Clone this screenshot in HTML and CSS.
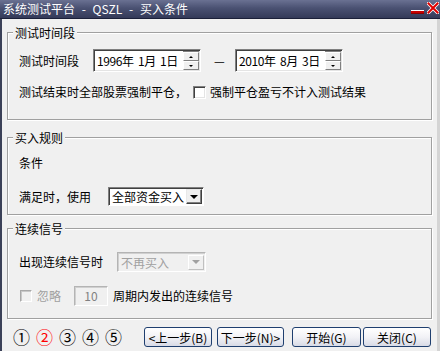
FILE: index.html
```html
<!DOCTYPE html>
<html>
<head>
<meta charset="UTF-8">
<title>买入条件</title>
<link rel="stylesheet" href="styles.css">
</head>
<body>

<div class="window">
	<div class="titlebar">
		<span class="title">系统测试平台 - QSZL - 买入条件</span>
		<span class="caption-btns">
			<svg class="cap-min" width="13" height="4" viewBox="0 0 13 4">
				<rect x="0" y="0" width="13" height="4" fill="#c80000"/>
				<rect x="0" y="0" width="13" height="1" fill="#ffffff"/>
				<rect x="0" y="3" width="13" height="1" fill="#8a0000"/>
			</svg>
			<svg class="cap-close" width="12" height="12" viewBox="0 0 12 12">
				<path d="M1.5 1.5 L10.5 10.5 M10.5 1.5 L1.5 10.5" stroke="#ffffff" stroke-width="3.6" stroke-linecap="square"/>
				<path d="M1.5 1.5 L10.5 10.5 M10.5 1.5 L1.5 10.5" stroke="#e00000" stroke-width="2" stroke-linecap="square"/>
			</svg>
		</span>
	</div>

	<div class="client">

		<!-- 测试时间段 -->
		<fieldset class="group group-time">
			<legend>测试时间段</legend>
			<div class="row row-dates">
				<span class="label">测试时间段</span>
				<span class="datebox">
					<span class="datetext">1996年 1月 1日</span>
					<span class="spin"><span class="spin-btn"><i class="tri-up"></i></span><span class="spin-btn"><i class="tri-down"></i></span></span>
				</span>
				<span class="dash">—</span>
				<span class="datebox datebox-end">
					<span class="datetext">2010年 8月 3日</span>
					<span class="spin"><span class="spin-btn"><i class="tri-up"></i></span><span class="spin-btn"><i class="tri-down"></i></span></span>
				</span>
			</div>
			<div class="row row-close">
				<span class="label">测试结束时全部股票强制平仓，</span>
				<span class="check check-close"></span>
				<span class="label">强制平仓盈亏不计入测试结果</span>
			</div>
		</fieldset>

		<!-- 买入规则 -->
		<fieldset class="group group-rule">
			<legend>买入规则</legend>
			<div class="row row-cond">
				<span class="label">条件</span>
			</div>
			<div class="row row-use">
				<span class="label">满足时，使用</span>
				<span class="select select-use">
					<span class="select-text">全部资金买入</span>
					<span class="select-arrow"><i class="tri-down-big"></i></span>
				</span>
			</div>
		</fieldset>

		<!-- 连续信号 -->
		<fieldset class="group group-signal">
			<legend>连续信号</legend>
			<div class="row row-signal">
				<span class="label">出现连续信号时</span>
				<span class="select select-off">
					<span class="select-text">不再买入</span>
					<span class="select-arrow"><i class="tri-down-big"></i></span>
				</span>
			</div>
			<div class="row row-ignore">
				<span class="check check-off"></span>
				<span class="label label-off">忽略</span>
				<span class="numbox">10</span>
				<span class="label">周期内发出的连续信号</span>
			</div>
		</fieldset>

		<div class="footer">
			<span class="steps">
				<span class="step">①</span>
				<span class="step step-on">②</span>
				<span class="step">③</span>
				<span class="step">④</span>
				<span class="step">⑤</span>
			</span>
			<button type="button" class="btn btn-prev">&lt;上一步(B)</button>
			<button type="button" class="btn btn-next">下一步(N)&gt;</button>
			<button type="button" class="btn btn-start">开始(G)</button>
			<button type="button" class="btn btn-close">关闭(C)</button>
		</div>

	</div>
</div>

</body>
</html>
```

FILE: styles.css
```css
* {box-sizing: border-box;}
body {margin: 0; font-family: "Noto Sans CJK SC", "Liberation Sans", sans-serif; font-size: 12px; color: #000;}

.window {width: 440px; height: 351px; background: #f0f0f0; overflow: hidden; display: flex; flex-direction: column;}

/* title bar */
.titlebar {height: 19px; flex: none; display: flex; justify-content: space-between; align-items: flex-start; padding: 0 1px 0 3px; color: #fff; border-bottom: 1px solid #1b2039; background: linear-gradient(#6a7192, #4a5172 45%, #343a59);}
.title {line-height: 18px; white-space: pre; word-spacing: 4px;}
.caption-btns {display: flex; gap: 3px; height: 13px; margin-top: 2px;}
.cap-min {align-self: flex-end; margin-bottom: 1px;}

.client {flex: 1; border-left: 2px solid #3b4158; border-right: 3px solid #d4d4d4; padding: 6px 5px 0;}

/* group boxes */
.group {margin: 0; padding: 0 11px; border: 1px solid #a0a0a0; box-shadow: inset 1px 1px 0 #fff, 1px 1px 0 #fff; min-width: 0;}
.group legend {padding: 0 2px; margin-left: -6px; line-height: 15px; background: #f0f0f0;}
.group-time {padding-top: 9px; padding-bottom: 19px;}
.group-rule {margin-top: 10px; padding-top: 10px; padding-bottom: 8px;}
.group-signal {margin-top: 6px; padding-top: 16px; padding-bottom: 12px;}

.row {display: flex; align-items: center; line-height: 16px; white-space: pre;}
.row-close {margin-top: 12px;}
.row-use {margin-top: 16px;}
.row-ignore {margin-top: 14px;}

/* date picker */
.datebox {display: flex; align-items: center; width: 108px; height: 23px; padding: 1px 1px 1px 2px; background: #fff; border: 1px solid; border-color: #808080 #fff #fff #808080; box-shadow: inset 1px 1px 0 #404040, inset -1px -1px 0 #e4e4e4;}
.row-dates .datebox {margin-left: 14px;}
.row-dates .datebox-end {margin-left: 9px;}
.datetext {flex: 1; padding-left: 1px; line-height: 19px; word-spacing: 2px; letter-spacing: -0.4px;}
.spin {width: 16px; height: 19px; display: flex; flex-direction: column; border-top: 1px solid #808080;}
.spin-btn {flex: 1; display: flex; align-items: center; justify-content: center; background: #f0f0f0; border: 1px solid; border-color: #fff #808080 #808080 #fff;}
.tri-up {border-left: 2px solid transparent; border-right: 2px solid transparent; border-bottom: 2px solid #000;}
.tri-down {border-left: 2px solid transparent; border-right: 2px solid transparent; border-top: 2px solid #000;}
.dash {margin-left: 13px; width: 12px;}

/* check boxes */
.check {display: inline-block; width: 13px; height: 13px; background: #fff; border: 1px solid; border-color: #808080 #fff #fff #808080; box-shadow: inset 1px 1px 0 #404040, inset -1px -1px 0 #e4e4e4;}
.check-close {margin: 0 4px 0 6px;}
.check-off {margin-left: 1px; width: 12px; height: 12px; background: #f0f0f0; border-color: #a8a8a8 #fff #fff #a8a8a8; box-shadow: inset 1px 1px 0 #c8c8c8;}

/* drop downs */
.select {display: flex; align-items: center; height: 19px; padding: 1px; background: #fff; border: 1px solid; border-color: #808080 #fff #fff #808080; box-shadow: inset 1px 1px 0 #404040;}
.select-use {width: 96px; margin-left: 17px;}
.select-text {flex: 1; padding-left: 2px; line-height: 15px;}
.select-arrow {width: 16px; height: 15px; display: flex; align-items: center; justify-content: center; background: #f0f0f0; border: 1px solid; border-color: #e8e8e8 #404040 #404040 #e8e8e8; box-shadow: inset -1px -1px 0 #808080;}
.tri-down-big {border-left: 4px solid transparent; border-right: 4px solid transparent; border-top: 4px solid #000;}
.select-off {width: 89px; height: 20px; margin-left: 14px; background: #f0f0f0; color: #a0a0a0; border-color: #b4b4b4 #fff #fff #b4b4b4; box-shadow: inset 1px 1px 0 #d0d0d0;}
.select-off .select-arrow {border-color: #fff #c0c0c0 #c0c0c0 #fff; box-shadow: none;}
.select-off .tri-down-big {border-top-color: #a0a0a0;}

.label-off {color: #a0a0a0; margin-left: 5px;}
.numbox {width: 34px; height: 20px; margin: 0 5px 0 13px; line-height: 18px; text-align: center; color: #808080; background: #f0f0f0; border: 1px solid; border-color: #b4b4b4 #fff #fff #b4b4b4; box-shadow: inset 1px 1px 0 #d0d0d0;}

/* bottom bar */
.footer {display: flex; align-items: center; margin-top: 8px; height: 20px;}
.steps {display: flex; gap: 7px; margin-left: 6px;}
.step {width: 16px; font-size: 17px; line-height: 16px; text-align: center;}
.step-on {color: #f00;}

.btn {width: 68px; height: 20px; padding: 0; font-family: "Noto Sans CJK SC", "Liberation Sans", sans-serif; font-size: 12px; color: #000; border: 1px solid #1f3f6f; border-radius: 3px; background: linear-gradient(#ffffff, #f2f2f6 50%, #d8dbe6);}
.btn-prev {margin-left: 23px;}
.btn-next {margin-left: 5px; width: 67px;}
.btn-start {margin-left: 8px; width: 69px;}
.btn-close {margin-left: 2px;}
```
